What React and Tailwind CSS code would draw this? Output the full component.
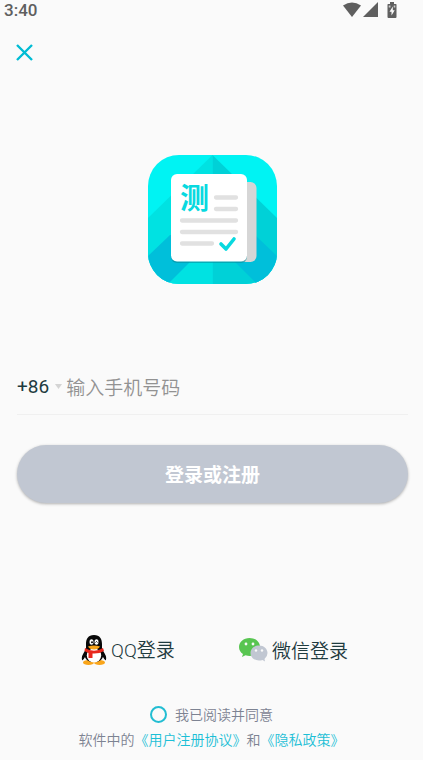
import React, { useState } from "react";

const StatusBar = () => (
  <div className="flex h-5 items-center justify-between pl-1 pr-[26px] text-[#5f5f5f]">
    <span className="font-[Roboto,sans-serif] text-[17px] font-medium leading-5">3:40</span>
    <div className="flex items-center gap-0.5">
      <svg width="18" height="16" viewBox="0 0 18 16" fill="currentColor">
        <path d="M0 3.5Q9-2.5 18 3.5L9 15Z" />
      </svg>
      <svg width="16" height="16" viewBox="0 0 16 16" fill="currentColor">
        <path d="M15 0V15H0Z" />
      </svg>
      <svg className="ml-1.5" width="10" height="16" viewBox="0 0 10 16">
        <path d="M3 0H7V2H9Q9.5 2 9.5 3V15Q9.5 16 8.5 16H1.5Q.5 16 .5 15V3Q.5 2 1 2H3Z" fill="#5f5f5f" />
        <path d="M5.8 4.5L2.5 9.8H4.5V13.5L7.7 8.2H5.8Z" fill="#fafafa" />
        <path d="M1.7 3.5H3.5V5.5H1.7ZM6.7 3.5H8.3V5.5H6.7Z" fill="#fafafa" opacity=".7" />
      </svg>
    </div>
  </div>
);

const AppLogo = () => (
  <svg width="129" height="129" viewBox="0 0 129 129" role="img" aria-label="测">
    <defs>
      <clipPath id="tile">
        <rect width="129" height="129" rx="31" />
      </clipPath>
    </defs>
    <g clipPath="url(#tile)">
      <rect width="129" height="129" fill="#00f3f3" />
      <path d="M64.5 0L0 63V129H64.5Z" fill="#00e2e2" />
      <path d="M64.5 0L129 63V129H64.5Z" fill="#00d1d7" />
      <path d="M22 80L0 101V129H20L44 105V80Z" fill="#00bfda" />
      <path d="M107 80L129 101V129H109L85 105V80Z" fill="#00bfda" />
    </g>
    <rect x="90" y="27" width="18.5" height="80" rx="6" fill="#d6d6d6" />
    <rect x="23" y="22" width="76" height="86" rx="6" fill="#078d9c" opacity=".6" />
    <rect x="23" y="19" width="76" height="87.5" rx="6" fill="#fff" />
    <text
      x="32"
      y="54"
      fontSize="29"
      fontWeight="700"
      fill="#08d9df"
      className="font-['Noto_Sans_CJK_SC',sans-serif]"
    >
      测
    </text>
    <g stroke="#e1e1e1" strokeWidth="4.3" strokeLinecap="round">
      <path d="M68 42.5H88M68 54H88M34 65.5H88M34 77H88M34 88.5H64" />
    </g>
    <path
      d="M73 89L78 94L86 84"
      fill="none"
      stroke="#08d9df"
      strokeWidth="3.6"
      strokeLinecap="round"
      strokeLinejoin="round"
    />
  </svg>
);

const QQIcon = () => (
  <svg width="26" height="32" viewBox="0 0 26 32">
    <path d="M4 17Q0 22 1 26Q2 27 4 23ZM22 17Q26 22 25 26Q24 27 22 23Z" fill="#080808" />
    <ellipse cx="7.5" cy="28.5" rx="5.5" ry="2.5" fill="#f9a51a" />
    <ellipse cx="18.5" cy="28.5" rx="5.5" ry="2.5" fill="#f9a51a" />
    <path d="M13 1C7 1 5 5 5 10L5 14C2 20 3 28 13 28S24 20 21 14V10C21 5 19 1 13 1Z" fill="#080808" />
    <ellipse cx="13" cy="21.5" rx="7.2" ry="7" fill="#fff" />
    <ellipse cx="10.5" cy="8" rx="2" ry="2.8" fill="#fff" />
    <ellipse cx="15.5" cy="8" rx="2" ry="2.8" fill="#fff" />
    <circle cx="11" cy="8.3" r="1" fill="#080808" />
    <path d="M14.5 8.5Q15.5 6.5 16.5 8.5" fill="none" stroke="#080808" strokeWidth=".9" />
    <path d="M7 12.5Q13 10.5 19 12.5Q17.5 15.5 13 15.5T7 12.5Z" fill="#f9a51a" />
    <path d="M4 14Q13 19.5 22 14L23 17Q18 20 11.5 19.5V24H7.5V19Q5 18 3.5 17Z" fill="#e8281d" />
  </svg>
);

const WechatIcon = () => (
  <svg width="29" height="26" viewBox="0 0 29 26">
    <path d="M10.5 1C4.5 1 0 5 0 10C0 13 1.5 15.5 4 17L3 20L6.5 18.3Q12 20 16 17.5C19.5 16 21 13 21 10C21 5 16.5 1 10.5 1Z" fill="#58c551" />
    <circle cx="7" cy="7" r="1.4" fill="#fafafa" />
    <circle cx="14" cy="7" r="1.4" fill="#fafafa" />
    <path d="M20 8.5C15 8.5 11.5 12 11.5 16S15 23.5 20 23.5Q22 23.5 23.5 23L26 24.5L25.5 22Q28.5 19.5 28.5 16C28.5 12 25 8.5 20 8.5Z" fill="#c1c7d2" />
    <circle cx="17" cy="13.5" r="1.2" fill="#fafafa" />
    <circle cx="23" cy="13.5" r="1.2" fill="#fafafa" />
  </svg>
);

const App = () => {
  const [phone, setPhone] = useState("");
  const [agreed, setAgreed] = useState(false);

  return (
    <div className="flex min-h-screen flex-col bg-[#fafafa] font-['Noto_Sans_CJK_SC',sans-serif] text-[#1f3b3f]">
      <StatusBar />

      <div className="flex px-4 pt-6">
        <button type="button" aria-label="关闭" className="text-[#00bcd4]">
          <svg width="17" height="17" viewBox="0 0 17 17" stroke="currentColor" strokeWidth="2.4">
            <path d="M1 1L16 16M16 1L1 16" />
          </svg>
        </button>
      </div>

      <div className="mt-[94px] flex justify-center pl-0.5">
        <AppLogo />
      </div>

      <form className="mt-[75px] pl-[17px] pr-[15px]" onSubmit={(e) => e.preventDefault()}>
        <div className="flex h-14 items-center border-b border-[#f0f0f0]">
          <button type="button" className="flex items-center gap-1.5 font-[Roboto,sans-serif] text-[19px] leading-7">
            +86
            <svg width="7" height="5" viewBox="0 0 7 5" fill="#d4d4d4">
              <path d="M0 0H7L3.5 5Z" />
            </svg>
          </button>
          <input
            type="tel"
            aria-label="手机号码"
            placeholder="输入手机号码"
            value={phone}
            onChange={(e) => setPhone(e.target.value)}
            className="ml-1 min-w-0 flex-1 bg-transparent text-[19px] font-[350] leading-7 outline-none placeholder:text-[#929292]"
          />
        </div>
        <button
          type="submit"
          className="mt-[30px] h-[58px] w-full rounded-full bg-[#c1c7d2] text-[19px] font-bold text-white shadow-[0_1px_3px_rgba(0,0,0,0.3)]"
        >
          登录或注册
        </button>
      </form>

      <div className="mt-auto flex justify-center gap-16 pl-1.5 text-[19px] font-[350] leading-8">
        <button type="button" className="flex items-center gap-1">
          <QQIcon />
          <span>
            <span className="font-[Roboto,sans-serif]">QQ</span>登录
          </span>
        </button>
        <button type="button" className="flex items-center gap-1">
          <WechatIcon />
          微信登录
        </button>
      </div>

      <div className="mt-[35px] pb-2 text-center text-[14px] font-[350] leading-[25px] text-[#7d8392]">
        <label className="flex items-center justify-center gap-2">
          <input
            type="checkbox"
            checked={agreed}
            onChange={(e) => setAgreed(e.target.checked)}
            className="size-[17px] appearance-none rounded-full border-2 border-[#22bdd2] checked:bg-[#22bdd2]"
          />
          我已阅读并同意
        </label>
        <p>
          软件中的
          <a href="#terms" className="text-[#1cbfd6]">《用户注册协议》</a>
          和
          <a href="#privacy" className="text-[#1cbfd6]">《隐私政策》</a>
        </p>
      </div>
    </div>
  );
};

export default App;
